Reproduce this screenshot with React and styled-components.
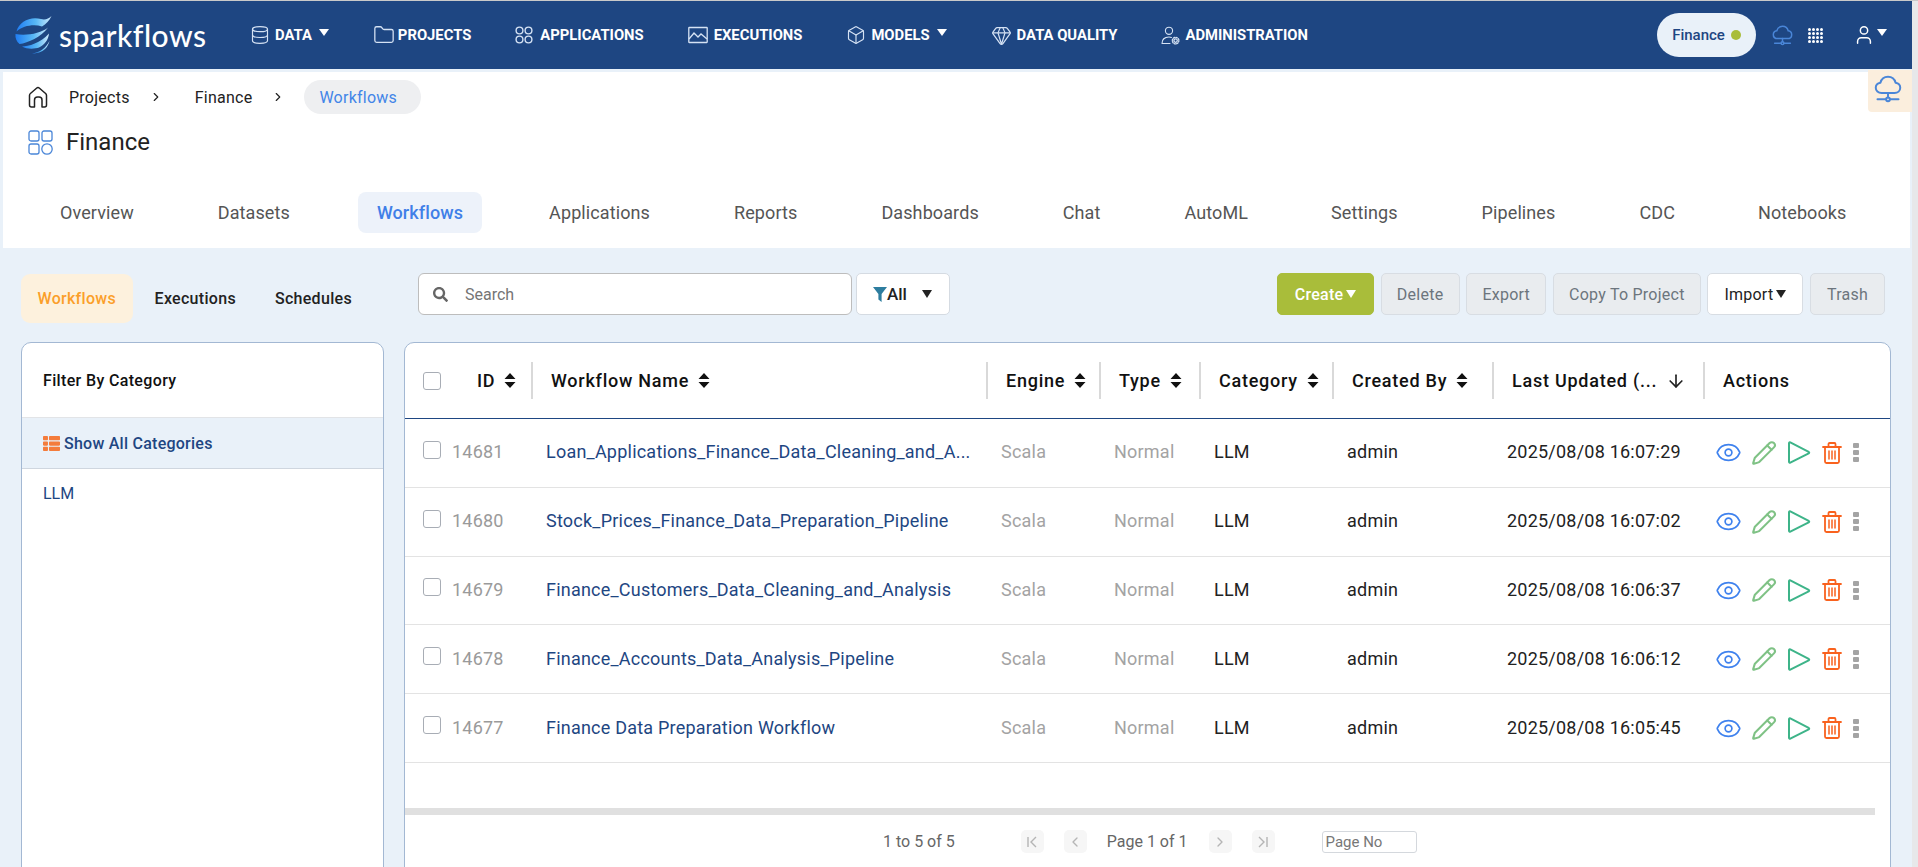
import React from "react";
import styled, { createGlobalStyle } from "styled-components";
import { Database, Folder, Box, Gem, Eye, Pencil, ArrowDown, ChevronRight, ChevronLeft, User } from "lucide-react";
import { FaSearch, FaThList } from "react-icons/fa";

const navItems = [
  { label: "DATA", icon: "data", caret: true },
  { label: "PROJECTS", icon: "folder" },
  { label: "APPLICATIONS", icon: "apps" },
  { label: "EXECUTIONS", icon: "exec" },
  { label: "MODELS", icon: "box", caret: true },
  { label: "DATA QUALITY", icon: "gem" },
  { label: "ADMINISTRATION", icon: "admin" },
];

const tabs = [
  { label: "Overview", left: 32 },
  { label: "Datasets", left: 84 },
  { label: "Workflows", left: 88, active: true },
  { label: "Applications", left: 86 },
  { label: "Reports", left: 84 },
  { label: "Dashboards", left: 84 },
  { label: "Chat", left: 84 },
  { label: "AutoML", left: 84 },
  { label: "Settings", left: 83 },
  { label: "Pipelines", left: 84 },
  { label: "CDC", left: 84 },
  { label: "Notebooks", left: 83 },
];

const columns = ["Workflow Name", "Engine", "Type", "Category", "Created By"];

const rows = [
  { id: 14681, name: "Loan_Applications_Finance_Data_Cleaning_and_A...", date: "2025/08/08 16:07:29" },
  { id: 14680, name: "Stock_Prices_Finance_Data_Preparation_Pipeline", date: "2025/08/08 16:07:02" },
  { id: 14679, name: "Finance_Customers_Data_Cleaning_and_Analysis", date: "2025/08/08 16:06:37" },
  { id: 14678, name: "Finance_Accounts_Data_Analysis_Pipeline", date: "2025/08/08 16:06:12" },
  { id: 14677, name: "Finance Data Preparation Workflow", date: "2025/08/08 16:05:45" },
];

const COLS = "128px 455px 113px 100px 133px 160px 211px 1fr";

const GlobalStyle = createGlobalStyle`
  html, body { margin: 0; padding: 0; height: 100%; overflow: hidden; }
  body { font-family: Roboto, "Liberation Sans", sans-serif; background: #e9f1f9; }
  * { box-sizing: border-box; }
`;

const CloudNet = ({ size = 20, color = "#4a86d8", sw = 1.7 }) => (
  <svg width={size} height={size} viewBox="0 0 24 24" fill="none" stroke={color} strokeWidth={sw} strokeLinecap="round" strokeLinejoin="round">
    <path d="M6.500 15.500C3.600 15.500 1.500 13.600 1.500 11c0-2.300 1.700-4.100 4-4.400C6.300 3.600 8.900 1.500 12 1.500s5.700 2.100 6.500 5.100c2.300.3 4 2.100 4 4.400 0 2.600-2.100 4.500-5 4.500z" />
    <path d="M12 15.500v3.700" />
    <circle cx="12" cy="20.800" r="1.600" />
    <path d="M3 20.800h7.400M13.600 20.800H21" />
  </svg>
);

const HomeIcon = () => (
  <svg width="20" height="22" viewBox="0 0 20 22" fill="none" stroke="#222" strokeWidth="1.500" strokeLinejoin="round">
    <path d="M1.500 9.500C1.500 8.700 1.800 8 2.400 7.500L8.500 2.200c.9-.8 2.100-.8 3 0l6.100 5.300c.6.5.9 1.200.9 2V19c0 1.100-.9 2-2 2h-2.500v-7c0-1.700-1.300-3-3-3h-1.500c-1.700 0-3 1.300-3 3v7H3.500c-1.100 0-2-.9-2-2z" />
  </svg>
);

const AppsIcon = ({ color = "#d5e2f4" }) => (
  <svg width="20" height="18" viewBox="0 0 20 18" fill="none" stroke={color} strokeWidth="1.400">
    <circle cx="4.500" cy="4.500" r="3.400" />
    <circle cx="13.500" cy="4.500" r="3.400" />
    <circle cx="4.500" cy="13.500" r="3.400" />
    <circle cx="13.500" cy="13.500" r="3.400" />
  </svg>
);

const ExecIcon = () => (
  <svg width="21" height="18" viewBox="0 0 21 18" fill="none" stroke="#d5e2f4" strokeWidth="1.300">
    <rect x="0.800" y="1.500" width="18.400" height="15" rx="0.500" />
    <path d="M1 13l5-6 4 4 3-3 6 5" />
  </svg>
);

const AdminIcon = () => (
  <svg width="19" height="19" viewBox="0 0 19 19" fill="none" stroke="#d5e2f4" strokeWidth="1.100" strokeLinecap="round">
    <circle cx="8" cy="4.800" r="3.600" />
    <path d="M1 17.500c0-4 2.600-6.500 7-6.500 1 0 1.800.1 2.500.4M1 17.500h8" />
    <circle cx="14.600" cy="14.600" r="1.700" strokeWidth="1.300" />
    <circle cx="14.600" cy="14.600" r="3.300" strokeDasharray="1.300 1.300" strokeWidth="1.300" />
  </svg>
);

const NavIcon = ({ name }) => {
  const props = { color: "#d5e2f4", strokeWidth: 1.4 };
  if (name === "data") return <Database size={20} {...props} />;
  if (name === "folder") return <Folder size={22} {...props} />;
  if (name === "apps") return <AppsIcon />;
  if (name === "exec") return <ExecIcon />;
  if (name === "box") return <Box size={20} {...props} />;
  if (name === "gem") return <Gem size={21} {...props} />;
  return <AdminIcon />;
};

const Logo = () => (
  <svg width="37" height="38" viewBox="0 0 37 38">
    <defs>
      <linearGradient id="sw" x1="0" y1="0" x2="1" y2="0">
        <stop offset="0" stopColor="#1f7cf2" />
        <stop offset="0.55" stopColor="#58b8f5" />
        <stop offset="1" stopColor="#cfeafc" />
      </linearGradient>
    </defs>
    <path fill="url(#sw)" d="M26 3C16 0 4 5 1.500 15.500C8 9.500 19 8 27 10.500C31 8 34.500 4.500 36.500 0C33.500 3 30 4 26 3Z" />
    <path fill="url(#sw)" d="M0.500 18C0 22 1.500 25.500 4.500 28C13 27 26 21 33 11.500C26 17.500 11 20 0.500 18Z" />
    <path fill="url(#sw)" d="M7 30.500C13 30.500 26 27 34 17.500C33.500 24 29 29 24 31.500C20 33 12 33.500 7 30.500Z" />
    <path fill="url(#sw)" d="M17 37.500C24 37 31 32 34.500 25C33 31 29 35 24 36.500C22 37 19 37.500 17 37.500Z" />
  </svg>
);

const SortIcon = () => (
  <svg width="12" height="15" viewBox="0 0 12 15" fill="#111">
    <path d="M6 0l5.500 6H.5zM6 15L.5 9h11z" />
  </svg>
);

const FilterIcon = () => (
  <svg width="14" height="15" viewBox="0 0 14 15" fill="#2d7d9f">
    <path d="M0 0h14L8.600 7v8L5.400 12.500V7z" />
  </svg>
);

const PlayIcon = () => (
  <svg width="24" height="23" viewBox="0 0 24 23" fill="none" stroke="#3eb489" strokeWidth="2" strokeLinejoin="round">
    <path d="M2 2.200v18.600c0 .8.700 1.100 1.300.8l18.400-9.300c.7-.4.700-1.200 0-1.500L3.300 1.400C2.700 1.100 2 1.400 2 2.200z" />
  </svg>
);

const TrashIcon = () => (
  <svg width="20" height="22" viewBox="0 0 20 22" fill="none" stroke="#f9621e" strokeWidth="1.800" strokeLinecap="round">
    <path d="M1 5h18M6.500 5V2.200c0-.6.400-1.200 1-1.200h5c.6 0 1 .6 1 1.200V5" />
    <path d="M3 5v14.500c0 .9.700 1.500 1.500 1.500h11c.8 0 1.500-.6 1.500-1.500V5" />
    <path d="M7 9v8M10 9v8M13 9v8" strokeWidth="1.500" />
  </svg>
);

const PageEnd = ({ flip }) => (
  <svg width="14" height="14" viewBox="0 0 14 14" fill="none" stroke="currentColor" strokeWidth="1.400" style={{ transform: flip ? "scaleX(-1)" : "none" }}>
    <path d="M3 2v10M11 2L6 7l5 5" />
  </svg>
);

const Page = styled.div`
  display: flex;
  width: 100vw;
  height: 100vh;
  overflow: hidden;
  border-top: 1px solid #c9c9c9;
`;

const Main = styled.div`
  position: relative;
  flex: 1;
  min-width: 0;
  background: #e9f1f9;
`;

const ScrollStrip = styled.div`
  width: 6px;
  background: #e7e8ea;
`;

const NavBar = styled.header`
  height: 68px;
  display: flex;
  align-items: center;
  background: #1e4682;
  padding: 0 25px 0 15px;
`;

const Brand = styled.div`
  display: flex;
  align-items: center;
  gap: 7px;
  width: 235px;
  flex-shrink: 0;
`;

const BrandName = styled.span`
  font-family: Lato, sans-serif;
  font-size: 30px;
  font-weight: 500;
  color: #fff;
  letter-spacing: 0.5px;
  line-height: 1;
`;

const NavList = styled.nav`
  display: flex;
  align-items: center;
  gap: 44px;
  flex: 1;
`;

const NavLink = styled.div`
  display: flex;
  align-items: center;
  gap: ${(p) => (p.$tight ? 3 : 5)}px;
  color: #fff;
  font-size: 14.8px;
  font-weight: 700;
  white-space: nowrap;
`;

const Caret = styled.span`
  width: 0;
  height: 0;
  margin-left: ${(p) => p.$gap || 3}px;
  margin-top: ${(p) => p.$top || 0}px;
  border-left: ${(p) => (p.$big ? 5.5 : 5)}px solid transparent;
  border-right: ${(p) => (p.$big ? 5.5 : 5)}px solid transparent;
  border-top: ${(p) => (p.$big ? 8 : 7)}px solid ${(p) => p.$color || "#fff"};
`;

const NavRight = styled.div`
  display: flex;
  align-items: center;
`;

const ProjectPill = styled.div`
  display: flex;
  align-items: center;
  justify-content: center;
  gap: 6px;
  width: 99px;
  height: 44px;
  margin-right: 16px;
  border-radius: 22px;
  background: #e9f1f9;
  color: #1e4682;
  font-size: 15px;
  font-weight: 500;
`;

const Dot = styled.span`
  width: 10px;
  height: 10px;
  border-radius: 50%;
  background: #a9bd3a;
`;

const GridIcon = styled.div`
  display: grid;
  grid-template-columns: repeat(4, 3px);
  grid-auto-rows: 3px;
  gap: 1px;
  margin: 0 30px 0 15px;
  span {
    background: #fff;
    border-radius: 50%;
  }
`;

const FloatCloud = styled.div`
  position: absolute;
  right: 0;
  top: 69px;
  width: 44px;
  height: 42px;
  padding: 0 5px 4px 0;
  display: flex;
  align-items: center;
  justify-content: center;
  background: #fbeedd;
  border-bottom-left-radius: 4px;
`;

const TopPanel = styled.section`
  height: 176px;
  margin: 3px 2px 0 3px;
  background: #fff;
  padding: 8px 0 0 25px;
`;

const Crumbs = styled.div`
  display: flex;
  align-items: center;
  height: 34px;
  color: #222;
  font-size: 16px;
  letter-spacing: 0.25px;
`;

const CrumbText = styled.span`
  margin: 0 19px 0 ${(p) => p.$left || 0}px;
`;

const CrumbActive = styled.span`
  display: flex;
  align-items: center;
  margin-left: 19px;
  height: 34px;
  padding: 0 24px 0 15px;
  border-radius: 17px;
  background: #eeeff1;
  color: #4285e8;
`;

const TitleRow = styled.div`
  display: flex;
  align-items: center;
  gap: 13px;
  margin-top: 11px;
  height: 34px;
  font-size: 24px;
  color: #222;
`;

const TabBar = styled.div`
  display: flex;
  align-items: center;
  margin-top: 33px;
  height: 41px;
`;

const Tab = styled.div`
  display: flex;
  align-items: center;
  height: 41px;
  font-size: 18px;
  letter-spacing: 0.1px;
  color: #555;
  margin-left: ${(p) => p.$left}px;
  ${(p) =>
    p.$active &&
    `
    margin-left: ${p.$left - 20}px;
    margin-right: -19px;
    padding: 0 19px;
    border-radius: 8px;
    background: #edf2fa;
    color: #3f7fe8;
    font-weight: 500;
  `}
`;

const Workspace = styled.div`
  display: grid;
  grid-template-columns: 363px 1fr;
  grid-template-rows: 69px 1fr;
  column-gap: 20px;
  padding: 25px 21px 0 21px;
`;

const SubTabs = styled.div`
  display: flex;
  align-items: flex-start;
`;

const SubTab = styled.div`
  display: flex;
  align-items: center;
  height: 49px;
  padding: ${(p) => (p.$active ? "0 16.5px" : "0")};
  margin: 1px ${(p) => (p.$active ? 22 : 39)}px 0 0;
  border-radius: 9px;
  font-size: 16px;
  font-weight: 500;
  letter-spacing: 0.3px;
  color: ${(p) => (p.$active ? "#fb9f2a" : "#222")};
  background: ${(p) => (p.$active ? "#fdf1dd" : "transparent")};
`;

const Toolbar = styled.div`
  display: flex;
  align-items: flex-start;
  padding: 0 6px 0 14px;
`;

const SearchBox = styled.div`
  display: flex;
  align-items: center;
  gap: 15px;
  width: 434px;
  height: 42px;
  padding-left: 14px;
  background: #fff;
  border: 1px solid #bdbdbd;
  border-radius: 6px;
  color: #666;
`;

const SearchInput = styled.input`
  flex: 1;
  min-width: 0;
  border: 0;
  outline: 0;
  background: transparent;
  font: 400 16px Roboto, sans-serif;
  &::placeholder { color: #757575; opacity: 1; }
`;

const FilterButton = styled.div`
  display: flex;
  align-items: center;
  width: 94px;
  height: 42px;
  margin-left: 4px;
  padding-left: 16px;
  background: #fff;
  border: 1px solid #d5dbe2;
  border-radius: 5px;
  font-size: 17px;
  font-weight: 500;
  color: #222;
`;

const Actions = styled.div`
  display: flex;
  gap: 6.6px;
  margin-left: auto;
`;

const ActionButton = styled.div`
  display: flex;
  align-items: center;
  justify-content: center;
  height: 42px;
  width: ${(p) => p.$w}px;
  border-radius: 5px;
  font-size: 16px;
  letter-spacing: 0.25px;
  font-weight: ${(p) => (p.$kind === "create" ? 500 : 400)};
  color: ${(p) => (p.$kind === "create" ? "#fff" : p.$kind === "import" ? "#222" : "#6c757d")};
  background: ${(p) => (p.$kind === "create" ? "#a9bd3a" : p.$kind === "import" ? "#fff" : "#e9ecef")};
  border: 1px solid ${(p) => (p.$kind === "create" ? "#a9bd3a" : "#d8dde3")};
`;

const Card = styled.div`
  height: 560px;
  background: #fff;
  border: 1px solid #a3b8d3;
  border-radius: 10px;
  overflow: hidden;
`;

const CardHeader = styled.div`
  display: flex;
  align-items: center;
  height: 75px;
  padding-left: 21px;
  font-size: 16px;
  font-weight: 500;
  letter-spacing: 0.35px;
  color: #111;
  border-bottom: 1px solid #e2e4e7;
`;

const AllCategories = styled.div`
  display: flex;
  align-items: center;
  gap: 4px;
  height: 51px;
  padding-left: 21px;
  background: #e9f1f9;
  border-bottom: 1px solid #cfd6df;
  color: #1e4682;
  font-size: 16px;
  font-weight: 500;
  letter-spacing: 0.25px;
`;

const CategoryItem = styled.div`
  padding: 15px 0 0 21px;
  color: #1e4682;
  font-size: 16px;
  line-height: 20px;
`;

const HeadRow = styled.div`
  display: grid;
  grid-template-columns: ${COLS};
  align-items: center;
  height: 76px;
  border-bottom: 1px solid #1e4682;
`;

const HeadCell = styled.div`
  display: flex;
  align-items: center;
  gap: 9px;
  height: 37px;
  padding-left: 18px;
  border-right: ${(p) => (p.$last ? 0 : "2px solid #d9d9d9")};
  font-size: 18px;
  font-weight: 500;
  color: #111;
  letter-spacing: 0.75px;
  white-space: nowrap;
`;

const IdHead = styled(HeadCell)`
  gap: 0;
`;

const CheckBox = styled.span`
  flex-shrink: 0;
  width: 18px;
  height: 18px;
  border: 1.5px solid #a8adb5;
  border-radius: 3px;
  background: #fff;
`;

const RowCheck = styled(CheckBox)`
  margin-top: -4px;
`;

const IdLabel = styled.span`
  margin-left: 36px;
  margin-right: 9px;
`;

const Row = styled.div`
  display: grid;
  grid-template-columns: ${COLS};
  align-items: center;
  height: 68.8px;
  padding-bottom: 2px;
  border-bottom: 1px solid #e3e3e3;
  font-size: 18px;
  letter-spacing: 0.22px;
`;

const IdCell = styled.div`
  display: flex;
  align-items: center;
  gap: 11px;
  padding-left: 18px;
  color: #9a9a9a;
`;

const Cell = styled.div`
  padding-left: 13px;
  color: ${(p) => p.$color || "#222"};
  white-space: nowrap;
`;

const IconCell = styled.div`
  display: flex;
  align-items: center;
  padding-left: 6px;
  margin-top: 2px;
`;

const ActionIcon = styled.div`
  display: flex;
  align-items: center;
  justify-content: center;
  width: ${(p) => p.$w}px;
`;

const MoreDots = styled.div`
  display: flex;
  flex-direction: column;
  gap: 2px;
  span {
    width: 6px;
    height: 5px;
    background: #a4a4a4;
    border-radius: 1px;
  }
`;

const TableSpacer = styled.div`
  height: 45px;
`;

const HScroll = styled.div`
  height: 7px;
  margin-right: 15px;
  background: #e0e0e0;
`;

const Pager = styled.div`
  display: flex;
  align-items: center;
  height: 54px;
  padding-left: 478px;
  color: #666;
  font-size: 16px;
`;

const PageButton = styled.div`
  display: flex;
  align-items: center;
  justify-content: center;
  width: 23px;
  height: 23px;
  margin-left: ${(p) => p.$left}px;
  border-radius: 5px;
  background: #f6f6f6;
  color: #b5b5b5;
`;

const PageLabel = styled.span`
  margin-left: ${(p) => p.$left || 0}px;
`;

const PageInput = styled.input`
  width: 95px;
  height: 22px;
  margin: 0 0 0 47px;
  padding: 0 3px;
  border: 1px solid #d4d8dd;
  border-radius: 3px;
  outline: 0;
  font: 400 15px Roboto, sans-serif;
  &::placeholder { color: #777; opacity: 1; }
`;

const App = () => (
  <>
    <GlobalStyle />
    <Page>
      <Main>
        <NavBar>
          <Brand>
            <Logo />
            <BrandName>sparkflows</BrandName>
          </Brand>
          <NavList>
            {navItems.map((item) => (
              <NavLink key={item.label} $tight={item.icon === "folder"}>
                <NavIcon name={item.icon} />
                {item.label}
                {item.caret && <Caret $gap={2} $top={-6} />}
              </NavLink>
            ))}
          </NavList>
          <NavRight>
            <ProjectPill>
              Finance
              <Dot />
            </ProjectPill>
            <CloudNet size={21} />
            <GridIcon>
              {Array.from({ length: 16 }).map((_, i) => (
                <span key={i} />
              ))}
            </GridIcon>
            <User size={22} color="#fff" strokeWidth={1.6} />
            <Caret $gap={2} $top={-6} />
          </NavRight>
        </NavBar>
        <FloatCloud>
          <CloudNet size={28} />
        </FloatCloud>
        <TopPanel>
          <Crumbs>
            <HomeIcon />
            <CrumbText $left={21}>Projects</CrumbText>
            <ChevronRight size={14} color="#222" />
            <CrumbText $left={32}>Finance</CrumbText>
            <ChevronRight size={14} color="#222" />
            <CrumbActive>Workflows</CrumbActive>
          </Crumbs>
          <TitleRow>
            <svg width="25" height="25" viewBox="0 0 25 25" fill="none" stroke="#4a86d8" strokeWidth="1.300">
              <rect x="1" y="1" width="10" height="10" rx="2" />
              <rect x="14" y="1" width="10" height="10" rx="2" />
              <rect x="1" y="14" width="10" height="10" rx="2" />
              <circle cx="19" cy="19" r="5.200" />
            </svg>
            Finance
          </TitleRow>
          <TabBar>
            {tabs.map((t) => (
              <Tab key={t.label} $left={t.left} $active={t.active}>
                {t.label}
              </Tab>
            ))}
          </TabBar>
        </TopPanel>
        <Workspace>
          <SubTabs>
            <SubTab $active>Workflows</SubTab>
            <SubTab>Executions</SubTab>
            <SubTab>Schedules</SubTab>
          </SubTabs>
          <Toolbar>
            <SearchBox>
              <FaSearch size={15} />
              <SearchInput placeholder="Search" />
            </SearchBox>
            <FilterButton>
              <FilterIcon />
              All
              <Caret $big $gap={15} $color="#222" />
            </FilterButton>
            <Actions>
              <ActionButton $w={97} $kind="create">
                Create
                <Caret $big $gap={3} />
              </ActionButton>
              <ActionButton $w={79}>Delete</ActionButton>
              <ActionButton $w={80}>Export</ActionButton>
              <ActionButton $w={148}>Copy To Project</ActionButton>
              <ActionButton $w={96} $kind="import">
                Import
                <Caret $big $gap={3} $color="#222" />
              </ActionButton>
              <ActionButton $w={75}>Trash</ActionButton>
            </Actions>
          </Toolbar>
          <Card>
            <CardHeader>Filter By Category</CardHeader>
            <AllCategories>
              <FaThList size={17} color="#f47c3c" />
              Show All Categories
            </AllCategories>
            <CategoryItem>LLM</CategoryItem>
          </Card>
          <Card>
            <HeadRow>
              <IdHead>
                <CheckBox />
                <IdLabel>ID</IdLabel>
                <SortIcon />
              </IdHead>
              {columns.map((label) => (
                <HeadCell key={label}>
                  {label}
                  <SortIcon />
                </HeadCell>
              ))}
              <HeadCell>
                Last Updated (...
                <ArrowDown size={20} color="#222" />
              </HeadCell>
              <HeadCell $last>Actions</HeadCell>
            </HeadRow>
            {rows.map((r) => (
              <Row key={r.id}>
                <IdCell>
                  <RowCheck />
                  {r.id}
                </IdCell>
                <Cell $color="#1e4682">{r.name}</Cell>
                <Cell $color="#a3a3a3">Scala</Cell>
                <Cell $color="#a3a3a3">Normal</Cell>
                <Cell>LLM</Cell>
                <Cell>admin</Cell>
                <Cell>{r.date}</Cell>
                <IconCell>
                  <ActionIcon $w={35}>
                    <Eye size={27} color="#3f82ee" strokeWidth={1.5} />
                  </ActionIcon>
                  <ActionIcon $w={35}>
                    <Pencil size={26} color="#7fc285" strokeWidth={1.9} />
                  </ActionIcon>
                  <ActionIcon $w={35}>
                    <PlayIcon />
                  </ActionIcon>
                  <ActionIcon $w={31}>
                    <TrashIcon />
                  </ActionIcon>
                  <ActionIcon $w={18}>
                    <MoreDots>
                      <span />
                      <span />
                      <span />
                    </MoreDots>
                  </ActionIcon>
                </IconCell>
              </Row>
            ))}
            <TableSpacer />
            <HScroll />
            <Pager>
              <PageLabel>1 to 5 of 5</PageLabel>
              <PageButton $left={66}>
                <PageEnd />
              </PageButton>
              <PageButton $left={20}>
                <ChevronLeft size={16} />
              </PageButton>
              <PageLabel $left={20}>Page 1 of 1</PageLabel>
              <PageButton $left={21}>
                <ChevronRight size={16} />
              </PageButton>
              <PageButton $left={20}>
                <PageEnd flip />
              </PageButton>
              <PageInput placeholder="Page No" />
            </Pager>
          </Card>
        </Workspace>
      </Main>
      <ScrollStrip />
    </Page>
  </>
);

export default App;
